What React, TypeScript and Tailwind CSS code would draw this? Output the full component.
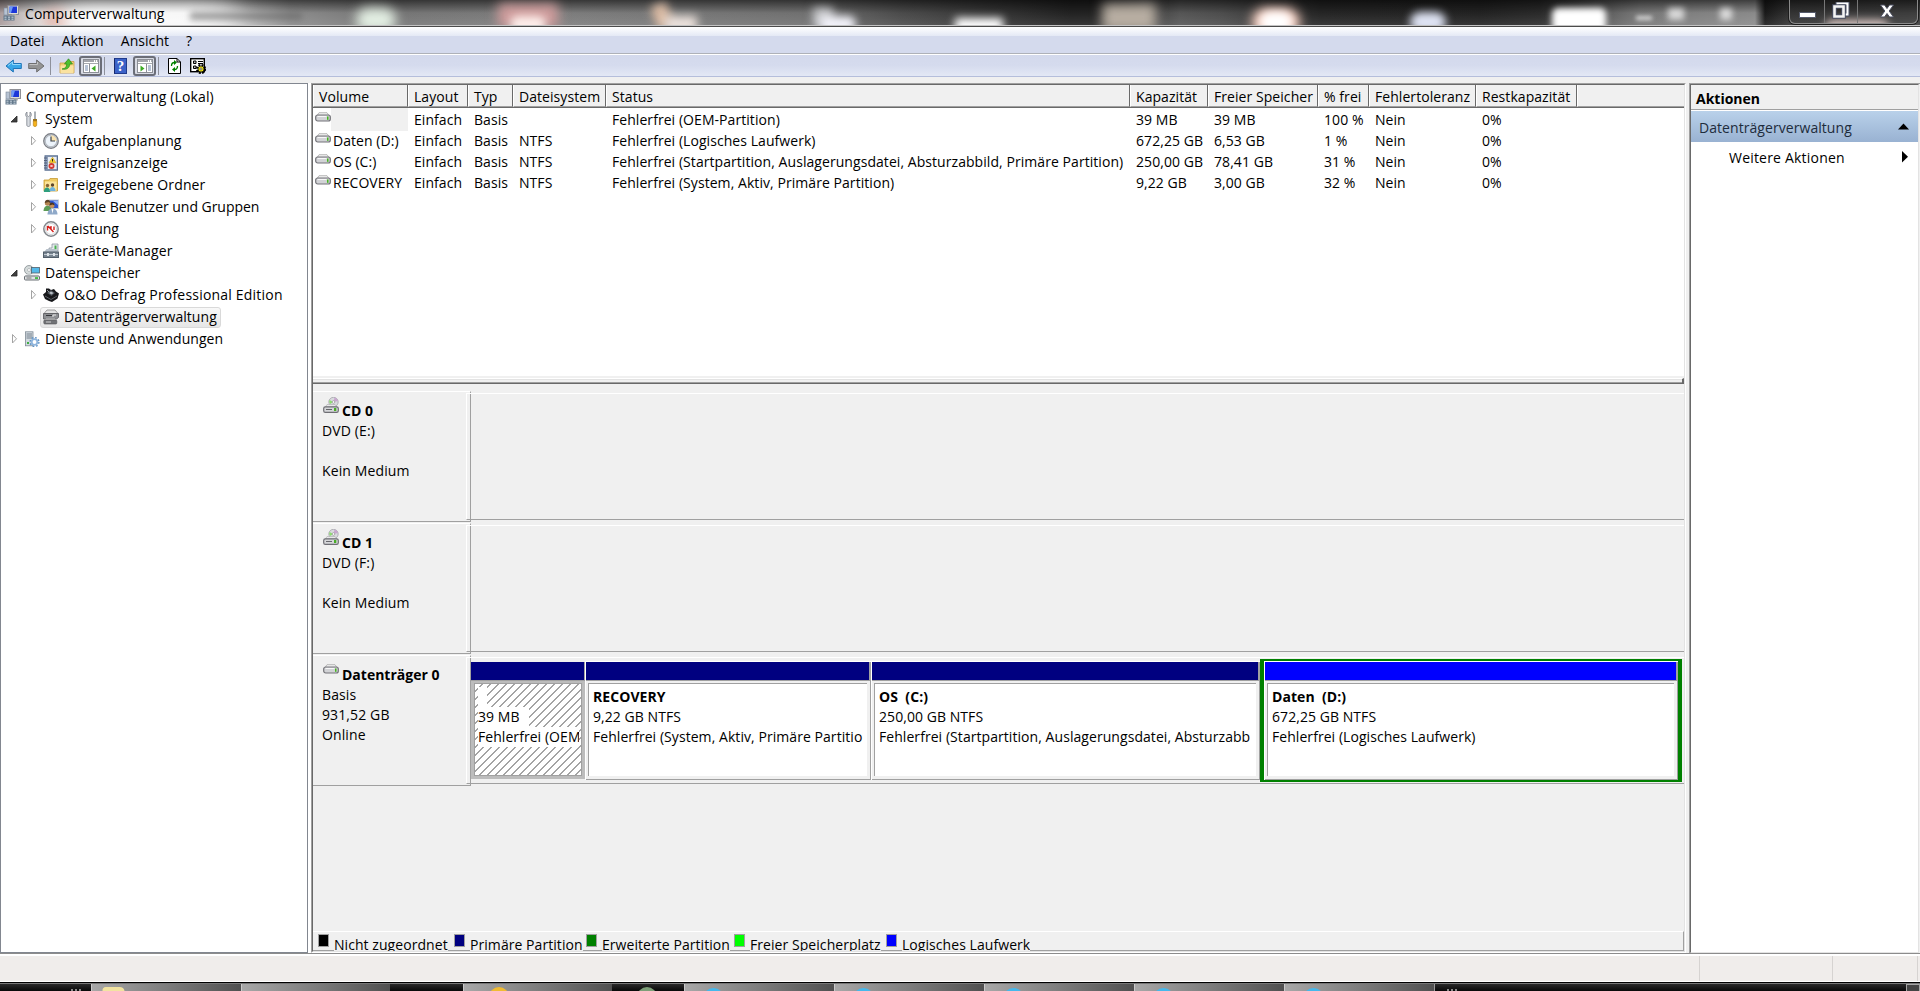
import type { ReactNode } from "react";

interface IconProps {
  children: ReactNode;
  w?: number;
  h?: number;
}

function Svg({ children, w = 16, h = 16 }: IconProps) {
  return (
    <svg width={w} height={h} viewBox={`0 0 ${w} ${h}`} className="block shrink-0">
      {children}
    </svg>
  );
}

function ComputerIcon() {
  return (
    <Svg>
      <rect x="5" y="0.5" width="10.5" height="9" fill="#dcdcd6" stroke="#8f9096" />
      <rect x="6.5" y="1.5" width="7.5" height="6.5" fill="#1c36d8" />
      <path d="M6.5 1.5H10L8 8H6.5Z" fill="#6f9bf5" />
      <rect x="9" y="9.5" width="4" height="2" fill="#b9b9b4" />
      <rect x="1" y="3" width="3.5" height="7" fill="#b7c3d3" stroke="#7c8798" strokeWidth=".6" />
      <rect x="0.5" y="10.5" width="11" height="5" fill="#64798c" />
      <path d="M1.5 12.2h2m1.5 0h2m1.5 0h2M1.5 14.2h2m1.5 0h2m1.5 0h2" stroke="#c6d3dd" />
    </Svg>
  );
}

function ToolsIcon() {
  return (
    <Svg>
      <path d="M3 1v3.500l1.500 1L6 4.500V1c1.500 1 2 3.500.2 5.200V14c0 2-3.400 2-3.400 0V6.200C1 4.500 1.500 2 3 1Z" fill="#d9dde2" stroke="#7c828a" strokeWidth=".8" />
      <path d="M10.500.8h1V8h-1z" fill="#aab0b8" stroke="#8d939a" strokeWidth=".6" />
      <rect x="9" y="8" width="4" height="2" fill="#9a7420" />
      <path d="M9.300 10h3.400v4.300c0 1.600-3.400 1.600-3.400 0z" fill="#f5b21c" stroke="#b47a0c" strokeWidth=".6" />
    </Svg>
  );
}

function ClockIcon() {
  return (
    <Svg>
      <circle cx="8" cy="8" r="7.3" fill="#c9ccd1" stroke="#787c83" strokeWidth="1.2" />
      <circle cx="8" cy="8" r="5.7" fill="#edf4fb" stroke="#9aa3ad" strokeWidth=".6" />
      <path d="M8 8V2.300A5.700 5.700 0 0 1 13.700 8Z" fill="#f9e3b0" />
      <path d="M8 3.500V8h4" stroke="#3b434d" fill="none" strokeWidth="1.2" />
    </Svg>
  );
}

function EventIcon() {
  return (
    <Svg>
      <rect x="2" y=".8" width="12.5" height="14.4" fill="#8d9fba" stroke="#5a6f91" />
      <rect x="5" y="2" width="8.5" height="12" fill="#e9eef5" />
      <path d="M1 3h3M1 5.500h3M1 8h3M1 10.500h3M1 13h3" stroke="#56627a" />
      <path d="M9.500 2.200 13 7.800H6Z" fill="#f8d229" stroke="#bb8d0c" strokeWidth=".5" />
      <path d="M9.500 4v2.500" stroke="#222" />
      <circle cx="8.500" cy="11" r="3" fill="#d33b34" />
      <path d="m7.500 10 2 2m0-2-2 2" stroke="#fff" strokeWidth=".9" />
    </Svg>
  );
}

function SharedFolderIcon() {
  return (
    <Svg>
      <path d="M1 3h5l1-1.500h7.500V14H1Z" fill="#f0cb62" stroke="#c79b31" strokeWidth=".8" />
      <path d="M2 4.500h11.500V14H2z" fill="#fbe49a" />
      <circle cx="4.500" cy="8.500" r="1.700" fill="#8a6433" />
      <circle cx="9.500" cy="8" r="1.700" fill="#5c452c" />
      <path d="M.8 15c0-6 6.500-6 6.500 0z" fill="#2e9f7d" />
      <path d="M6.500 14c0-5.500 6-5.500 6 0z" fill="#6fb3dc" />
    </Svg>
  );
}

function UsersIcon() {
  return (
    <Svg>
      <rect x="6" y="1" width="9.5" height="8.5" fill="#2b55d2" stroke="#c8cbd1" />
      <path d="M10 2h5v4z" fill="#8fb1f7" />
      <path d="M.5 12c0-7 8-7 8 0z" fill="#5c9b55" />
      <circle cx="4.500" cy="4" r="2.700" fill="#b58450" />
      <path d="M1.800 4c0-4.500 6-4.500 5.500 0L5.500 3Z" fill="#5a4128" />
      <path d="M4.500 15.500c0-8 10-8 10 0z" fill="#8fa9c9" />
      <circle cx="9" cy="6.500" r="2.500" fill="#c69058" />
      <path d="M6.400 6.500c0-4 5.200-4 5.200 0L9.500 5.500Z" fill="#4b3320" />
      <path d="m8.500 10 1 4.500 1-4.500z" fill="#fff" />
    </Svg>
  );
}

function PerfIcon() {
  return (
    <Svg>
      <circle cx="8" cy="8" r="7.2" fill="#fff" stroke="#82868b" strokeWidth="1.5" />
      <circle cx="8" cy="8" r="5.5" fill="none" stroke="#c3c6ca" strokeWidth=".8" />
      <path d="M4.500 9.500V5M5 5l5.500 6M8 5v3.500M11 5.500 11 9" stroke="#d5201c" strokeWidth="1.4" fill="none" />
    </Svg>
  );
}

function DeviceIcon() {
  return (
    <Svg>
      <path d="M9 1h6v7H6V5h3z" fill="#e4e8ec" stroke="#7f8a96" strokeWidth=".7" />
      <rect x="11.5" y="2.5" width="2" height="4" fill="#46b04d" />
      <path d="M1 9 3.500 6h9L15 9z" fill="#b8c1cb" />
      <rect x=".5" y="9" width="15" height="5.500" fill="#77838f" stroke="#525e6a" />
      <path d="M1 11.500h14" stroke="#c2cad2" />
      <rect x="4" y="10" width="2" height="3" fill="#dde3e8" />
      <rect x="10" y="10" width="2" height="3" fill="#dde3e8" />
    </Svg>
  );
}

function StorageIcon() {
  return (
    <Svg>
      <circle cx="5" cy="5" r="4.500" fill="#d5dbdb" stroke="#858d90" strokeWidth=".8" />
      <circle cx="5" cy="5" r="1.500" fill="#fff" stroke="#989fa2" strokeWidth=".6" />
      <rect x="7.500" y="2.500" width="8" height="5.500" fill="#55b9e9" stroke="#50606c" strokeWidth=".8" />
      <path d="M2 9.500h12l1.500 2H.5z" fill="#e6e8ea" />
      <rect x=".5" y="11" width="15" height="4" rx="1" fill="#e0e2e5" stroke="#6b7075" />
      <rect x="11" y="12.200" width="3" height="1.700" fill="#35b834" />
      <path d="M2.500 13h5" stroke="#777" />
    </Svg>
  );
}

function DefragIcon() {
  return (
    <Svg>
      <path d="M0 7.500 3 5V1.500h3L8 3l3-1 2 2.500 3 2-1.500 5L9 15l-3-1-4-2Z" fill="#16171a" />
      <path d="m4 6 4-3 4 3-3.500 3z" fill="#4a4f55" />
      <path d="m6 6 2-1.500L10.500 6 8.500 7.500z" fill="#b7bec5" />
      <path d="m2 9 6 3.500L14 9" stroke="#595d63" fill="none" />
      <path d="m4 3 2 2" stroke="#8d949b" />
    </Svg>
  );
}

function DiskMgmtIcon() {
  return (
    <Svg>
      <path d="M1 4.500 4 1h8l3 3.500z" fill="#e2e2e2" stroke="#8a8a8a" strokeWidth=".8" />
      <path d="M.5 4.500h15v4l-2 1.500h-13z" fill="#8e9093" stroke="#55575a" strokeWidth=".8" />
      <path d="M3 6.500h6" stroke="#35363a" />
      <path d="M10 8V6h3" stroke="#e6e6e6" fill="none" />
      <path d="M1.500 11.500 3 9.500h9l1.500 2z" fill="#c7c7c7" />
      <rect x=".8" y="11" width="13" height="4" rx="1" fill="#717376" stroke="#505255" strokeWidth=".6" />
      <path d="M3 13h5" stroke="#d0d0d0" />
    </Svg>
  );
}

function ServicesIcon() {
  return (
    <Svg>
      <rect x="1.500" y=".8" width="7.500" height="14" fill="#d3dae0" stroke="#7f8b95" strokeWidth=".8" />
      <path d="M2.500 3h5.500M2.500 5h5.500M2.500 7h5.500" stroke="#74818d" />
      <rect x="3" y="11" width="2" height="2" fill="#3fae43" />
      <circle cx="10.500" cy="11" r="4.400" fill="none" stroke="#5f93c6" strokeWidth="1.400" strokeDasharray="1.730 1.730" />
      <circle cx="10.500" cy="11" r="2.800" fill="#fff" stroke="#8fb5dd" strokeWidth="1.800" />
    </Svg>
  );
}

function DriveIcon() {
  return (
    <Svg w={16} h={10}>
      <path d="M2 3.500 4 .7h8l2 2.800z" fill="#f2f2f2" stroke="#a8a8a8" strokeWidth=".8" />
      <rect x=".7" y="3" width="14.600" height="6" rx="2" fill="#d2d3d6" stroke="#737378" strokeWidth="1.200" />
      <path d="M2.500 4.500h9" stroke="#f7f7f7" />
      <rect x="12" y="4.500" width="1.500" height="3.300" fill="#43b51f" />
    </Svg>
  );
}

function CdIcon() {
  return (
    <Svg>
      <circle cx="10.500" cy="5" r="4.700" fill="#d9dade" stroke="#a4a4aa" strokeWidth=".8" />
      <path d="M10.500 5 6.500 3A4.500 4.500 0 0 0 7 7z" fill="#8fdd72" />
      <path d="m10.500 5 1-4.500A4.500 4.500 0 0 1 15 4z" fill="#c9a7cf" />
      <circle cx="10.500" cy="5" r="1.300" fill="#fff" stroke="#888" strokeWidth=".6" />
      <path d="M2.500 10 4 7.500h8l2 2.500z" fill="#e9e9ea" stroke="#a9a9ab" strokeWidth=".6" />
      <rect x=".7" y="9.800" width="14.600" height="5.500" rx="1.600" fill="#d5d6d9" stroke="#6e6e74" strokeWidth="1.200" />
      <path d="M3 12.500h6" stroke="#66666b" />
      <rect x="11" y="11" width="2.300" height="3" fill="#48ad26" />
    </Svg>
  );
}

function ArrowIcon({ forward }: { forward?: boolean }) {
  return forward ? (
    <Svg w={17} h={14}>
      <path d="M.7 4.500h8V1L16 7l-7.300 6V9.500h-8z" fill="#949494" stroke="#6f6f6f" />
      <path d="M1.500 5.500h8V3" stroke="#c2c2c2" fill="none" />
    </Svg>
  ) : (
    <Svg w={17} h={14}>
      <path d="M16.300 4.500h-8V1L1 7l7.300 6V9.500h8z" fill="#39a7e8" stroke="#1f74b8" />
      <path d="M15.500 5.500h-8V3L3 6.600" stroke="#93d8fb" fill="none" />
    </Svg>
  );
}

function FolderUpIcon() {
  return (
    <Svg>
      <path d="M1 5h5l1-1.500h8V15H1Z" fill="#f1cf73" stroke="#c9a048" strokeWidth=".8" />
      <path d="M1.500 7.500h13V15h-13z" fill="#fae2a0" />
      <path d="M3 11c3.500-.5 4.500-2 4.800-5H5.500L9.500.8l4 5.200h-2.700C10.500 10 8 12 3 11Z" fill="#4cc02e" stroke="#2c8a18" strokeWidth=".7" />
    </Svg>
  );
}

function PaneIcon({ right }: { right?: boolean }) {
  return (
    <Svg w={16} h={14}>
      <rect x=".5" y=".5" width="15" height="13" fill="#fff" stroke="#8c8f96" />
      <path d="M1 2h10" stroke="#8c8f96" strokeWidth="1.600" />
      <path d="M12 2h1m1 0h1" stroke="#5b5f66" />
      <path d="M1 4.500h14" stroke="#a6a9ae" />
      {right ? (
        <>
          <path d="M9.500 5v8.500" stroke="#8c8f96" />
          <path d="M11 7h3M11 9h3M11 11h3" stroke="#6e86ab" />
          <path d="m3.500 6.500 4 3-4 3z" fill="#3cab23" />
        </>
      ) : (
        <>
          <path d="M6.500 5v8.500" stroke="#8c8f96" />
          <path d="M2 7h3M2 9h3M2 11h3" stroke="#6e86ab" />
          <path d="m12.500 6.500-4 3 4 3z" fill="#3cab23" />
        </>
      )}
    </Svg>
  );
}

function RefreshIcon() {
  return (
    <Svg w={13} h={16}>
      <path d="M.5.5h8.500L12.500 4v11.500H.5z" fill="#fff" stroke="#000" />
      <path d="M9 .5V4h3.500" fill="none" stroke="#000" />
      <path d="M3.500 8c0-3 1-3.500 3-3.500M9.500 8c0 3-1 3.500-3 3.500" stroke="#008000" fill="none" strokeWidth="1.300" />
      <path d="M6 2l3 2.500L6 7zM7 9l-3 2.500L7 14z" fill="#008000" />
    </Svg>
  );
}

function SettingsIcon() {
  return (
    <Svg>
      <rect x=".7" y=".7" width="13.600" height="13" fill="#fff" stroke="#000" strokeWidth="1.400" />
      <path d="M3.500 3h2.500v2.500H3.500zM3.500 8h2.500v2.500H3.500z" fill="#bbb" stroke="#000" />
      <path d="M8 3.500h5M8 5.500h5" stroke="#000" />
      <circle cx="11" cy="11" r="3.800" fill="none" stroke="#000" strokeWidth="2.600" strokeDasharray="1.800 1.200" />
      <circle cx="11" cy="11" r="3" fill="#f5ea1a" stroke="#000" strokeWidth=".7" />
      <circle cx="11" cy="11" r="1.100" fill="#fff" stroke="#000" strokeWidth=".5" />
    </Svg>
  );
}

interface TreeNode {
  label: string;
  level: number;
  icon: ReactNode;
  state?: "open" | "closed";
  selected?: boolean;
  tracking?: string;
}

const tree: TreeNode[] = [
  { label: "System", level: 1, icon: <ToolsIcon />, state: "open" },
  { label: "Aufgabenplanung", level: 2, icon: <ClockIcon />, state: "closed" },
  { label: "Ereignisanzeige", level: 2, icon: <EventIcon />, state: "closed", tracking: "tracking-[0.2px]" },
  { label: "Freigegebene Ordner", level: 2, icon: <SharedFolderIcon />, state: "closed", tracking: "tracking-[0.12px]" },
  { label: "Lokale Benutzer und Gruppen", level: 2, icon: <UsersIcon />, state: "closed", tracking: "tracking-[-0.03px]" },
  { label: "Leistung", level: 2, icon: <PerfIcon />, state: "closed", tracking: "tracking-[-0.03px]" },
  { label: "Geräte-Manager", level: 2, icon: <DeviceIcon />, tracking: "tracking-[0.12px]" },
  { label: "Datenspeicher", level: 1, icon: <StorageIcon />, state: "open", tracking: "tracking-[0.03px]" },
  { label: "O&O Defrag Professional Edition", level: 2, icon: <DefragIcon />, state: "closed", tracking: "tracking-[0.2px]" },
  { label: "Datenträgerverwaltung", level: 2, icon: <DiskMgmtIcon />, selected: true, tracking: "tracking-[0.06px]" },
  { label: "Dienste und Anwendungen", level: 1, icon: <ServicesIcon />, state: "closed", tracking: "tracking-[0.04px]" },
];

const headers = [
  "Volume",
  "Layout",
  "Typ",
  "Dateisystem",
  "Status",
  "Kapazität",
  "Freier Speicher",
  "% frei",
  "Fehlertoleranz",
  "Restkapazität",
];

const volumes = [
  ["", "Einfach", "Basis", "", "Fehlerfrei (OEM-Partition)", "39 MB", "39 MB", "100 %", "Nein", "0%"],
  ["Daten (D:)", "Einfach", "Basis", "NTFS", "Fehlerfrei (Logisches Laufwerk)", "672,25 GB", "6,53 GB", "1 %", "Nein", "0%"],
  ["OS (C:)", "Einfach", "Basis", "NTFS", "Fehlerfrei (Startpartition, Auslagerungsdatei, Absturzabbild, Primäre Partition)", "250,00 GB", "78,41 GB", "31 %", "Nein", "0%"],
  ["RECOVERY", "Einfach", "Basis", "NTFS", "Fehlerfrei (System, Aktiv, Primäre Partition)", "9,22 GB", "3,00 GB", "32 %", "Nein", "0%"],
];

const gridCols =
  "grid grid-cols-[95px_60px_45px_93px_524px_78px_110px_51px_107px_101px_1fr]";

function Expander({ state }: { state?: "open" | "closed" }) {
  return (
    <Svg w={8} h={10}>
      {state === "open" && <path d="M7 2v6H1z" fill="#404040" stroke="#262626" strokeWidth=".8" />}
      {state === "closed" && <path d="M2.500.5v8.500L6.500 4.800z" fill="#fff" stroke="#a3a3a3" />}
    </Svg>
  );
}

function TitleBar() {
  return (
    <div className="relative flex h-[27px] shrink-0 items-center overflow-hidden border-b border-[#4b4b4b] bg-[linear-gradient(90deg,#a89a9a_0,#dedede_40px,#f2f2f2_100px,#ececec_190px,#c4c4c4_240px,#8c8c8c_290px,#747474_380px,#7c7c7c_560px,#707070_800px,#4b4b4b_900px,#3c3c3c_960px,#222_1070px,#222_1100px,#555_1180px,#4d4d4d_1220px,#252525_1320px,#222_1480px,#2a2a2a_1540px,#777_1640px,#8a8a8a_1755px,#1a1a1a_1765px,#333_1790px,#3d3d3d_100%)]">
      <div className="absolute inset-0 bg-gradient-to-b from-black/55 via-transparent to-white/10" />
      <div className="absolute top-3 left-[46px] h-4 w-5 rounded-full bg-[#dd8a78] blur-sm" />
      <div className="absolute top-2 left-[60px] h-6 w-44 rounded-full bg-white/90 blur-md" />
      <div className="absolute top-3 left-[190px] h-2 w-28 bg-[#666]/60 blur-[3px]" />
      <div className="absolute top-2 left-[356px] h-6 w-10 rounded-full bg-[#e3efe3] blur-[6px]" />
      <div className="absolute top-1 left-[498px] h-6 w-[60px] bg-[#d09c9c] blur-[6px]" />
      <div className="absolute top-4 left-[510px] h-4 w-9 rounded-full bg-[#fff0ec] blur-[4px]" />
      <div className="absolute top-1 left-[654px] h-6 w-4 -rotate-[20deg] bg-[#ddbca4] blur-[5px]" />
      <div className="absolute top-4 left-[665px] h-4 w-8 bg-[#eee4de] blur-[5px]" />
      <div className="absolute top-2 left-[813px] h-5 w-5 bg-[#c9cacd] blur-[5px]" />
      <div className="absolute top-4 left-[820px] h-4 w-9 rounded-full bg-[#f4f4fb] blur-[4px]" />
      <div className="absolute top-[18px] left-[955px] h-4 w-[48px] bg-white blur-[4px]" />
      <div className="absolute top-1 left-[1102px] h-7 w-[54px] bg-[#b8aea2] blur-[6px]" />
      <div className="absolute top-2 left-[1252px] h-7 w-[48px] rounded-full bg-[#fdd3c4] blur-[6px]" />
      <div className="absolute top-3 left-[1260px] h-5 w-8 rounded-full bg-white blur-[4px]" />
      <div className="absolute top-3 left-[1410px] h-5 w-9 rounded-full bg-[#dfe4f4] blur-[4px]" />
      <div className="absolute top-2 left-[1552px] h-6 w-[54px] rounded-md bg-white blur-[3px]" />
      <div className="absolute top-4 left-[1636px] h-1 w-4 bg-white/70 blur-[2px]" />
      <div className="absolute top-2 left-[1668px] h-3 w-4 bg-white/70 blur-[3px]" />
      <div className="absolute top-2 left-[1720px] h-3 w-3 bg-white/70 blur-[3px]" />
      <div className="absolute top-[20px] left-[1825px] h-4 w-16 rounded-full bg-[#dcc8c4] blur-[4px]" />
      <div className="absolute inset-x-0 bottom-0 h-px bg-[#c4c4c4]" />
      <div className="relative flex items-center gap-[5px] pl-[3px]">
        <ComputerIcon />
        <span className="relative top-px pl-px text-[14px] leading-[26px]">Computerverwaltung</span>
      </div>
      <div className="relative mr-[2px] ml-auto flex h-[24px] w-[129px] self-start rounded-b-md border border-t-0 border-[#8a8a8a] shadow-[0_0_0_1px_#1c1c1c]">
        <div className="flex w-[35px] justify-center border-r border-[#777] pt-[13px]">
          <div className="h-[4px] w-[15px] bg-white outline outline-[#555a6b]" />
        </div>
        <div className="flex w-[33px] justify-center border-r border-[#777] pt-[2px]">
          <Svg w={18} h={17}>
            <path d="M5.500 4V1.500h10v11H13" fill="none" stroke="#4b5064" strokeWidth="4" />
            <path d="M5.500 4V1.500h10v11H13" fill="none" stroke="#fff" strokeWidth="2" />
            <path d="M2.500 4.500h9v10h-9z" fill="none" stroke="#4b5064" strokeWidth="4.600" />
            <path d="M2.500 4.500h9v10h-9z" fill="none" stroke="#f4f4f4" strokeWidth="2.600" />
          </Svg>
        </div>
        <div className="flex flex-1 justify-center pt-[4px] pr-px">
          <Svg w={16} h={14}>
            <path d="M1.500 1h4L8 4.500 10.500 1h4l-4.300 6 4.300 6h-4L8 9.500 5.500 13h-4l4.300-6z" fill="#fff" stroke="#4b4f60" />
          </Svg>
        </div>
      </div>
    </div>
  );
}

function ToolSeparator() {
  return <div className="h-[18px] w-px bg-[#8e919b]" />;
}

function Toolbar() {
  return (
    <div className="flex h-[23px] shrink-0 items-center border-t border-b border-t-white border-b-[#b5bedb] bg-gradient-to-b from-[#d3d9ec] via-[#d5dbee] to-[#e3e8f5] pl-[5px]">
      <ArrowIcon />
      <div className="w-[6px]" />
      <ArrowIcon forward />
      <div className="w-[5px]" />
      <ToolSeparator />
      <div className="w-[8px]" />
      <FolderUpIcon />
      <div className="w-[4px]" />
      <div className="flex h-[20px] w-[23px] items-center justify-center rounded-[3px] border-2 border-[#6b6e78] bg-[#d7dae3]">
        <PaneIcon />
      </div>
      <div className="w-[2px]" />
      <ToolSeparator />
      <div className="w-[9px]" />
      <div className="flex h-[16px] w-[13px] items-center justify-center border border-[#203b8c] border-l-[#16286a] bg-[#3b62c8] font-['Liberation_Serif'] text-[15px] font-bold text-white">
        ?
      </div>
      <div className="w-[6px]" />
      <div className="flex h-[20px] w-[23px] items-center justify-center rounded-[3px] border-2 border-[#6b6e78] bg-[#d7dae3]">
        <PaneIcon right />
      </div>
      <div className="w-[2px]" />
      <ToolSeparator />
      <div className="w-[9px]" />
      <RefreshIcon />
      <div className="w-[9px]" />
      <SettingsIcon />
    </div>
  );
}

function Tree() {
  return (
    <div className="w-[308px] shrink-0 border border-[#828790] bg-white pt-[2px]">
      <div className="flex h-[22px] items-center gap-[5px] pl-[4px]">
        <ComputerIcon />
        <span className="tracking-[0.12px]">Computerverwaltung (Lokal)</span>
      </div>
      {tree.map((node) => (
        <div
          key={node.label}
          className={`flex h-[22px] items-center ${node.level === 1 ? "pl-[9px]" : "pl-[28px]"}`}
        >
          <Expander state={node.state} />
          <div
            className={`ml-[3px] flex h-[21px] items-center gap-[5px] rounded-[3px] border pr-[3px] pl-[2px] ${
              node.selected
                ? "border-[#d9d9d9] bg-gradient-to-b from-[#f8f8f8] to-[#e6e6e6]"
                : "border-transparent"
            }`}
          >
            {node.icon}
            <span className={node.tracking ?? "tracking-[0.12px]"}>{node.label}</span>
          </div>
        </div>
      ))}
    </div>
  );
}

function VolumeList() {
  return (
    <div className="h-[291px] shrink-0 bg-white">
      <div className={`${gridCols} h-[23px] border-b border-[#696969] bg-[#f0f0f0]`}>
        {headers.map((header) => (
          <div
            key={header}
            className="overflow-hidden border-r border-b border-l border-r-[#696969] border-b-[#a0a0a0] border-l-white pl-[5px] leading-[24px] whitespace-nowrap"
          >
            {header}
          </div>
        ))}
        <div className="border-b border-l border-b-[#a0a0a0] border-l-white" />
      </div>
      {volumes.map((row, i) => (
        <div key={i} className={`${gridCols} h-[21px] leading-[23px]`}>
          <div className="flex pl-[2px]">
            <div className="pt-[4px]">
              <DriveIcon />
            </div>
            <span className={`flex-1 pl-[2px] whitespace-nowrap ${i === 0 ? "bg-[#f0f0f0]" : ""}`}>
              {row[0]}
            </span>
          </div>
          {row.slice(1).map((cell, j) => (
            <div key={j} className="pl-[6px] whitespace-nowrap">
              {cell}
            </div>
          ))}
        </div>
      ))}
    </div>
  );
}

interface DiskRowProps {
  name: string;
  icon: ReactNode;
  lines: string[];
  children?: ReactNode;
}

function DiskRow({ name, icon, lines, children }: DiskRowProps) {
  return (
    <div className="flex h-[132px] shrink-0">
      <div className="h-[131px] w-[158px] shrink-0 border-t border-r border-b border-t-white border-r-[#a0a0a0] border-b-[#a0a0a0] pt-[5px] pl-[9px] leading-[20px] tracking-[0.12px]">
        <div className="flex h-[24px] gap-[3px] pl-px">
          {icon}
          <span className="pt-[4px] font-bold tracking-normal">{name}</span>
        </div>
        {lines.map((line, i) => (
          <div key={i} className="h-[20px]">
            {line}
          </div>
        ))}
      </div>
      <div className="mt-[2px] -ml-[5px] flex h-[127px] flex-1 border-t border-b border-l border-t-white border-b-[#a0a0a0] border-l-white">
        {children}
      </div>
    </div>
  );
}

interface PartitionProps {
  name: string;
  size: string;
  status: string;
  width: string;
  logical?: boolean;
}

function Partition({ name, size, status, width, logical }: PartitionProps) {
  return (
    <div className={`flex h-[119px] shrink-0 flex-col border-t border-l border-white ${width}`}>
      <div
        className={`h-[19px] border-r-2 border-b border-[#a0a0a0] ${logical ? "bg-[#0000ff]" : "bg-[#000080]"}`}
      />
      <div className="flex-1 border-r border-b border-[#a0a0a0] pt-[2px] pr-[3px] pb-[3px] pl-[2px]">
        <div className="h-full overflow-hidden border-t border-l border-[#a0a0a0] bg-white pt-[3px] pr-[4px] pl-[4px] leading-[20px] whitespace-pre">
          <div className="font-bold">{name}</div>
          <div>{size}</div>
          <div className="overflow-hidden">{status}</div>
        </div>
      </div>
    </div>
  );
}

function OemPartition() {
  return (
    <div className="mt-px ml-[4px] flex h-[117px] w-[114px] shrink-0 flex-col">
      <div className="h-[19px] border-r border-b border-[#a0a0a0] bg-[#000080]" />
      <div className="flex-1 bg-[#bcbcbc] p-[3px] pt-[2px]">
        <div className="h-full overflow-hidden border border-[#a0a0a0] bg-[repeating-linear-gradient(135deg,#fff_0,#fff_4.700px,#a4a4a4_4.700px,#a4a4a4_5.657px)] pt-[3px] pl-[3px] leading-[20px] whitespace-nowrap">
          <div className="h-[20px] w-[9px] bg-white" />
          <div className="w-[51px] bg-white">39 MB</div>
          <div className="mr-[2px] overflow-hidden bg-white">Fehlerfrei (OEM</div>
        </div>
      </div>
    </div>
  );
}

const legend = [
  { label: "Nicht zugeordnet", color: "bg-black", width: "w-[136px]" },
  { label: "Primäre Partition", color: "bg-[#000080]", width: "w-[132px]" },
  { label: "Erweiterte Partition", color: "bg-[#008000]", width: "w-[148px]" },
  { label: "Freier Speicherplatz", color: "bg-[#00ff00]", width: "w-[152px]" },
  { label: "Logisches Laufwerk", color: "bg-[#0000ff]", width: "w-[150px]" },
];

function Legend() {
  return (
    <div className="mt-auto flex h-[20px] shrink-0 border-t border-r border-b border-t-white border-r-[#a0a0a0] border-b-[#a0a0a0] pl-[5px]">
      {legend.map((item) => (
        <div key={item.label} className={`flex gap-[5px] pt-[2px] ${item.width}`}>
          <div className={`h-[13px] w-[11px] shrink-0 border border-[#a0a0a0] ${item.color}`} />
          <div className="h-[17px] overflow-hidden bg-[#f0f0f0] leading-[21px] whitespace-nowrap">
            {item.label}
          </div>
        </div>
      ))}
    </div>
  );
}

function Actions() {
  return (
    <div className="ml-[3px] flex flex-1 border-t border-l border-[#a0a0a0]">
      <div className="mr-px flex-1 border-t border-r border-b border-l border-t-[#696969] border-r-[#e3e3e3] border-b-[#e3e3e3] border-l-[#696969] bg-white">
        <div className="h-[25px] border-b border-[#a0a0a0] bg-[#f0f0f0] pl-[5px] leading-[28px] font-bold tracking-normal">
          Aktionen
        </div>
        <div className="mt-px flex h-[31px] items-center justify-between bg-gradient-to-b from-[#b9d1ea] to-[#99b2d2] pr-[9px] pl-[8px] text-[#1e2c3c]">
          <span className="pt-[2px]">Datenträgerverwaltung</span>
          <Svg w={11} h={7}>
            <path d="M0 6.500 5.500.500l5.500 6z" fill="#000" />
          </Svg>
        </div>
        <div className="flex h-[30px] items-center justify-between pr-[10px] pl-[38px]">
          <span className="pt-[2px] tracking-[0.2px]">Weitere Aktionen</span>
          <Svg w={6} h={12}>
            <path d="M0 0v11.500L6 5.800z" fill="#000" />
          </Svg>
        </div>
      </div>
    </div>
  );
}

const taskButton =
  "relative h-full overflow-hidden border-l border-[#c9c9c9] bg-gradient-to-r from-[#a8a8a8] via-[#7d7d7d] to-[#505050] shrink-0";

function Dots() {
  return (
    <div className="flex gap-[2px] pt-[5px]">
      <div className="size-[2px] bg-[#888]" />
      <div className="size-[2px] bg-[#888]" />
      <div className="size-[2px] bg-[#888]" />
    </div>
  );
}

function BlueOrb() {
  return <div className="mt-[4px] ml-[18px] h-[14px] w-[21px] rounded-t-full bg-[#45b8ec]" />;
}

function Taskbar() {
  return (
    <div className="flex h-[9px] shrink-0 overflow-hidden border-t border-[#777] bg-gradient-to-b from-[#2a2a2a] to-[#050505]">
      <div className="w-[91px] shrink-0 pl-[71px]">
        <Dots />
      </div>
      <div className={`${taskButton} w-[150px]`}>
        <div className="mt-[3px] ml-[11px] h-3 w-[22px] skew-x-12 rounded-t-sm bg-[#f2e3a0]" />
      </div>
      <div className={`${taskButton} w-[149px]`} />
      <div className="w-[73px] shrink-0" />
      <div className={`${taskButton} w-[149px]`}>
        <div className="mt-[3px] ml-[25px] size-[20px] rounded-full border-[4px] border-[#f0bb32] bg-[#d9eefa]" />
      </div>
      <div className="w-[72px] shrink-0 pt-[3px] pl-[25px]">
        <div className="size-[20px] rounded-full bg-[#7d9f78]" />
      </div>
      {[0, 1, 2, 3, 4].map((n) => (
        <div key={n} className={`${taskButton} w-[150px]`}>
          <BlueOrb />
        </div>
      ))}
      <div className="flex-1 border-l border-[#999] pl-[12px]">
        <Dots />
      </div>
      <div className="w-[14px] border border-b-0 border-[#a5a5a5] bg-[#444]" />
    </div>
  );
}

export default function App() {
  return (
    <div className="flex h-[991px] w-[1920px] flex-col overflow-hidden bg-[#f0f0f0] font-['Open_Sans',sans-serif] text-[14px] leading-[20px] tracking-[0.06px] text-black">
      <TitleBar />
      <div className="flex h-[27px] shrink-0 items-center gap-[17px] border-b border-[#aeb1b8] bg-[linear-gradient(180deg,#fff_0,#e4e9f5_9px,#d4daed_9px,#d4daed_100%)] pt-[2px] pl-[10px]">
        <span>Datei</span>
        <span>Aktion</span>
        <span>Ansicht</span>
        <span>?</span>
      </div>
      <Toolbar />
      <div className="flex h-[876px] shrink-0 pt-[6px]">
        <Tree />
        <div className="w-[3px] bg-white" />
        <div className="flex w-[1375px] shrink-0 border-t border-r border-b border-l border-t-[#a0a0a0] border-r-white border-b-white border-l-[#a0a0a0]">
          <div className="flex w-full flex-col border border-t-[#696969] border-r-[#e3e3e3] border-b-[#e3e3e3] border-l-[#696969]">
            <VolumeList />
            <div className="mt-[2px] mb-[7px] h-[6px] shrink-0 border-t border-r-2 border-b border-t-white border-r-[#696969] border-b-[#696969]">
              <div className="h-full border-t border-b border-t-[#e3e3e3] border-b-[#a0a0a0]" />
            </div>
            <DiskRow name="CD 0" icon={<CdIcon />} lines={["DVD (E:)", "", "Kein Medium"]} />
            <DiskRow name="CD 1" icon={<CdIcon />} lines={["DVD (F:)", "", "Kein Medium"]} />
            <DiskRow
              name="Datenträger 0"
              icon={
                <div className="pt-[3px]">
                  <DriveIcon />
                </div>
              }
              lines={["Basis", "931,52 GB", "Online"]}
            >
              <div className="flex items-start pt-[3px]">
                <OemPartition />
                <Partition
                  name="RECOVERY"
                  size="9,22 GB NTFS"
                  status="Fehlerfrei (System, Aktiv, Primäre Partition"
                  width="w-[286px]"
                />
                <Partition
                  name="OS  (C:)"
                  size="250,00 GB NTFS"
                  status="Fehlerfrei (Startpartition, Auslagerungsdatei, Absturzabb"
                  width="w-[389px]"
                />
                <div className="-mt-[2px] h-[123px] w-[422px] shrink-0 border-x-4 border-y-2 border-[#008000]">
                  <Partition
                    name="Daten  (D:)"
                    size="672,25 GB NTFS"
                    status="Fehlerfrei (Logisches Laufwerk)"
                    width="w-[414px]"
                    logical
                  />
                </div>
              </div>
            </DiskRow>
            <Legend />
          </div>
        </div>
        <Actions />
      </div>
      <div className="h-[3px] shrink-0 border-t border-b-2 border-t-[#8c8c8c] border-b-white" />
      <div className="flex h-[25px] shrink-0 bg-[#f0edeb]">
        <div className="w-[1699px]" />
        <div className="w-[133px] border-l border-[#d6d3d1]" />
        <div className="w-[86px] border-x border-[#d6d3d1]" />
      </div>
      <div className="h-[2px] shrink-0 border-t border-b border-t-white border-b-black" />
      <Taskbar />
    </div>
  );
}
